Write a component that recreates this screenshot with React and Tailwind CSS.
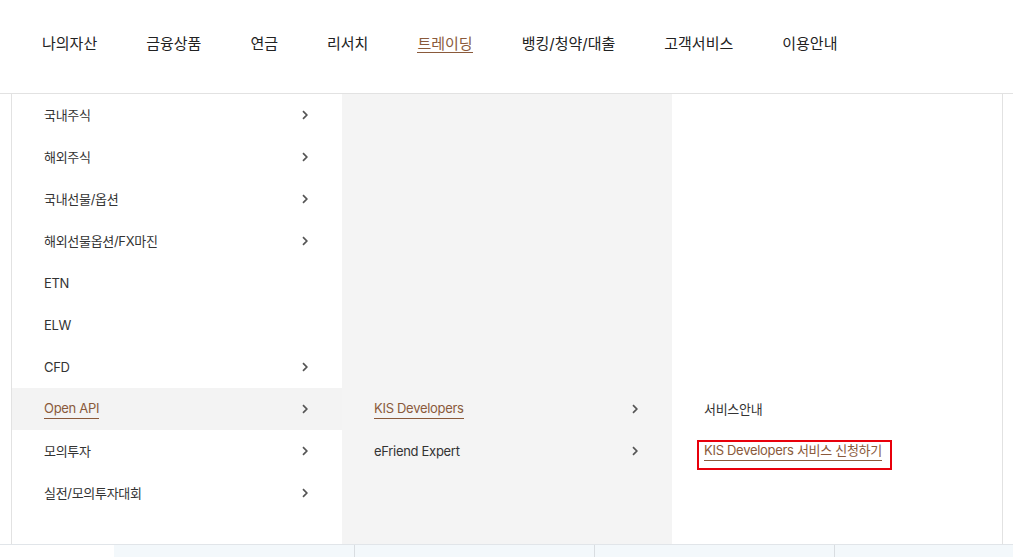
import React from 'react';

const navItems = ['나의자산', '금융상품', '연금', '리서치', '트레이딩', '뱅킹/청약/대출', '고객서비스', '이용안내'];

const tradingMenu = [
    { label: '국내주식', sub: true },
    { label: '해외주식', sub: true },
    { label: '국내선물/옵션', sub: true },
    { label: '해외선물옵션/FX마진', sub: true },
    { label: 'ETN', sub: false },
    { label: 'ELW', sub: false },
    { label: 'CFD', sub: true },
    { label: 'Open API', sub: true, active: true },
    { label: '모의투자', sub: true },
    { label: '실전/모의투자대회', sub: true },
];

const apiMenu = [
    { label: 'KIS Developers', active: true },
    { label: 'eFriend Expert' },
];

const Chevron = () => (
    <svg width="6" height="10" viewBox="0 0 6 10" className="text-[#555]">
        <path d="M1 1.2L4.8 5L1 8.8" fill="none" stroke="currentColor" strokeWidth="1.7" />
    </svg>
);

const MenuLabel = ({ label, active }) =>
    active ? (
        <span className="leading-[18px] pb-[1px] border-b border-[#8a5a3b] text-[#8a5a3b]">{label}</span>
    ) : (
        <span className="leading-[18px] text-[#333]">{label}</span>
    );

const App = () => {
    return (
        <div className="w-[1013px] h-[557px] overflow-hidden bg-white font-[Inter,'Noto_Sans_CJK_KR',sans-serif]">
            {/* Header */}
            <header className="h-[94px] border-b border-[#e2e2e2] flex items-center pb-[5px] pl-[42px] gap-[49px]">
                {navItems.map((item) => (
                    <span
                        key={item}
                        className={
                            item === '트레이딩'
                                ? 'shrink-0 text-[15px] leading-[16px] text-[#8a5a3b] border-b border-[#8a5a3b]'
                                : 'shrink-0 text-[15px] leading-[16px] text-[#222]'
                        }
                    >
                        {item}
                    </span>
                ))}
            </header>

            {/* Dropdown */}
            <div className="flex h-[450px]">
                <div className="w-[11px] shrink-0" />
                <div className="flex shrink-0 border-l border-r border-[#e2e2e2] text-[13px] tracking-[-0.3px]">
                    {/* Column 1 */}
                    <div className="w-[330px] bg-white pb-[30px]">
                        {tradingMenu.map((item) => (
                            <div
                                key={item.label}
                                className={`h-[42px] flex items-center justify-between pl-[32px] pr-[34px] ${item.active ? 'bg-[#f3f3f3]' : ''}`}
                            >
                                <MenuLabel label={item.label} active={item.active} />
                                {item.sub && <Chevron />}
                            </div>
                        ))}
                    </div>

                    {/* Column 2 */}
                    <div className="w-[330px] bg-[#f4f4f4] pt-[294px]">
                        {apiMenu.map((item) => (
                            <div key={item.label} className="h-[42px] flex items-center justify-between pl-[32px] pr-[34px]">
                                <MenuLabel label={item.label} active={item.active} />
                                <Chevron />
                            </div>
                        ))}
                    </div>

                    {/* Column 3 */}
                    <div className="w-[330px] bg-white pt-[294px]">
                        <div className="h-[42px] flex items-center pl-[32px]">
                            <span className="leading-[18px] text-[#333]">서비스안내</span>
                        </div>
                        <div className="h-[42px] flex items-center pl-[32px]">
                            <span className="relative leading-[18px] pb-[1px] border-b border-[#8a5a3b] text-[#8a5a3b]">
                                KIS Developers 서비스 신청하기
                                <span className="absolute -left-[7px] -top-[1px] -right-[10px] -bottom-[10px] border-2 border-[#e8000b]" />
                            </span>
                        </div>
                    </div>
                </div>
            </div>

            {/* Tab strip under the dropdown */}
            <div className="flex h-[13px] border-t border-[#e1e5e9]">
                <div className="w-[114px] shrink-0 bg-white" />
                <div className="w-[240px] shrink-0 bg-[#f3f8fb]" />
                <div className="w-[240px] shrink-0 bg-[#f3f8fb] border-l border-[#d9dde1]" />
                <div className="w-[240px] shrink-0 bg-[#f3f8fb] border-l border-[#d9dde1]" />
                <div className="w-[240px] shrink-0 bg-[#f3f8fb] border-l border-[#d9dde1]" />
            </div>
        </div>
    );
};

export default App;
